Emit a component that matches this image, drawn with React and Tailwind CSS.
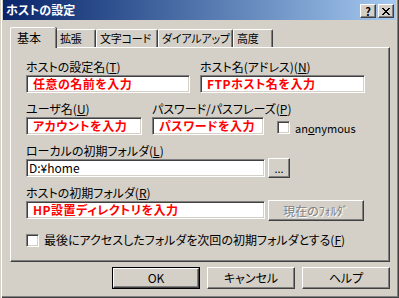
import React from "react";

const sunken =
  "bg-white border border-t-[#808080] border-l-[#808080] border-b-white border-r-white shadow-[inset_1px_1px_0_#404040,inset_-1px_-1px_0_#d4d0c8]";
const raised =
  "bg-[#d4d0c8] border border-t-white border-l-white border-b-[#404040] border-r-[#404040] shadow-[inset_-1px_-1px_0_#808080]";

function Label({ text, k }) {
  return (
    <div className="h-[14px] leading-[14px] text-[12px] text-black whitespace-nowrap">
      {text}(<span className="underline">{k}</span>)
    </div>
  );
}

function Field({ className, children, red }) {
  return (
    <div
      className={`${sunken} ${className} mt-[1px] h-[18px] flex items-center whitespace-nowrap overflow-hidden text-[12px] leading-[14px] ${
        red ? "pl-[6px] text-[#ff0000] font-bold tracking-[0.5px]" : "pl-[2px] text-black"
      }`}
    >
      {children}
    </div>
  );
}

function CheckBox() {
  return <div className={`${sunken} w-[13px] h-[13px] shrink-0`} />;
}

function Tab({ label, className, active }) {
  if (active) {
    return (
      <div
        className={`relative z-10 -mb-px h-[21px] ${className} bg-[#d4d0c8] border-t border-l border-white rounded-tl-[2px] rounded-tr-[2px] shadow-[inset_-1px_0_0_#808080,1px_0_0_#404040] pl-[6px] pt-[3px] text-[12px] leading-[14px]`}
      >
        {label}
      </div>
    );
  }
  return (
    <div
      className={`h-[18px] ${className} bg-[#d4d0c8] border-t border-l border-white rounded-tl-[2px] rounded-tr-[2px] shadow-[inset_-1px_0_0_#808080] border-r border-r-[#404040] pl-[3px] pt-[1px] text-[11px] leading-[14px] tracking-[-0.2px] whitespace-nowrap overflow-hidden`}
    >
      {label}
    </div>
  );
}

export default function App() {
  return (
    <div className="relative w-[399px] h-[298px] overflow-hidden bg-[#d4d0c8] pl-[3px] font-['Noto_Sans_CJK_JP',sans-serif] [font-feature-settings:'palt'] text-black shadow-[inset_1px_0_0_#d4d0c8,inset_2px_0_0_#ffffff,inset_-1px_-1px_0_#404040,inset_-2px_-2px_0_#808080]">
      {/* title bar */}
      <div className="w-[393px] h-[20px] bg-linear-to-r from-[#0a246a] to-[#a6caf0] flex items-center justify-between pl-[3px] pr-[2px]">
        <span className="text-white font-bold text-[12px] leading-[14px]">ホストの設定</span>
        <div className="flex gap-[2px] mt-[2px]">
          <div className={`${raised} w-[16px] h-[14px] flex items-center justify-center text-[11px] font-bold leading-none`}>
            ?
          </div>
          <div className={`${raised} w-[16px] h-[14px] flex items-center justify-center`}>
            <svg width="8" height="7" viewBox="0 0 8 7">
              <path d="M0 0h2v1h1v1h2V1h1V0h2v1h-1v1h-1v1h-1v1h1v1h1v1h1v1H6V6H5V5H3v1H2v1H0V6h1V5h1V4h1V3H2V2H1V1H0z" fill="#000" />
            </svg>
          </div>
        </div>
      </div>

      {/* tabs */}
      <div className="mt-[7px] ml-[7px] h-[20px] flex items-end">
        <Tab label="基本" className="w-[46px]" active />
        <Tab label="拡張" className="w-[40px]" />
        <Tab label="文字コード" className="w-[62px]" />
        <Tab label="ダイアルアップ" className="w-[75px]" />
        <Tab label="高度" className="w-[40px]" />
      </div>

      {/* panel */}
      <div className="ml-[7px] w-[380px] h-[215px] border border-t-white border-l-white border-b-[#404040] border-r-[#404040] shadow-[inset_-1px_-1px_0_#808080] pt-[12px] pl-[15px]">
        <div className="flex">
          <div className="w-[164px]">
            <Label text="ホストの設定名" k="T" />
            <Field className="w-[164px]" red>任意の名前を入力</Field>
          </div>
          <div className="ml-[10px] w-[165px]">
            <Label text="ホスト名(アドレス)" k="N" />
            <Field className="w-[165px]" red>FTPホスト名を入力</Field>
          </div>
        </div>

        <div className="flex mt-[9px]">
          <div className="w-[116px]">
            <Label text="ユーザ名" k="U" />
            <Field className="w-[116px]" red>アカウントを入力</Field>
          </div>
          <div className="ml-[10px] w-[112px]">
            <Label text="パスワード/パスフレーズ" k="P" />
            <Field className="w-[112px]" red>パスワードを入力</Field>
          </div>
          <div className="ml-[13px] mt-[19px] flex items-center h-[13px]">
            <CheckBox />
            <span className="ml-[5px] text-[11px] leading-[14px]">
              an<span className="underline">o</span>nymous
            </span>
          </div>
        </div>

        <div className="mt-[9px]">
          <Label text="ローカルの初期フォルダ" k="L" />
          <div className="flex">
            <Field className="w-[239px]">D:¥home</Field>
            <div className={`${raised} ml-[3px] w-[22px] h-[20px] flex items-center justify-center text-[11px] leading-none`}>
              ...
            </div>
          </div>
        </div>

        <div className="mt-[8px]">
          <Label text="ホストの初期フォルダ" k="R" />
          <div className="flex">
            <Field className="w-[239px]" red>HP設置ディレクトリを入力</Field>
            <div className={`${raised} ml-[3px] w-[96px] h-[21px] flex items-center justify-center text-[12px] leading-none text-[#808080] [text-shadow:1px_1px_0_#ffffff]`}>
              現在のﾌｫﾙﾀﾞ
            </div>
          </div>
        </div>

        <div className="mt-[12px] flex items-center">
          <CheckBox />
          <span className="ml-[5px] text-[12px] leading-[14px] whitespace-nowrap">
            最後にアクセスしたフォルダを次回の初期フォルダとする(<span className="underline">F</span>)
          </span>
        </div>
      </div>

      {/* buttons */}
      <div className="ml-[7px] w-[380px] mt-[5px] flex justify-end gap-[7px]">
        <div className="w-[88px] h-[22px] border border-black">
          <div className={`${raised} w-full h-full flex items-center justify-center text-[12px] leading-none`}>OK</div>
        </div>
        <div className={`${raised} w-[88px] h-[22px] flex items-center justify-center text-[12px] leading-none`}>
          キャンセル
        </div>
        <div className={`${raised} w-[88px] h-[22px] flex items-center justify-center text-[12px] leading-none`}>
          ヘルプ
        </div>
      </div>
    </div>
  );
}
